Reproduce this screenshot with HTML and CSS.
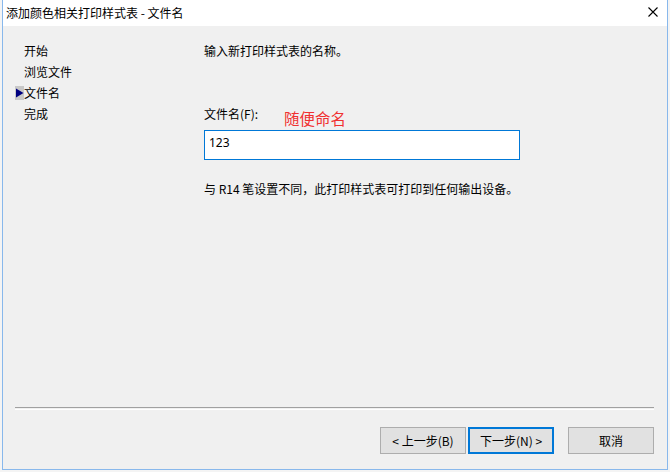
FILE: index.html
```html
<!DOCTYPE html>
<html lang="zh-CN">
<head>
<meta charset="utf-8">
<title>添加颜色相关打印样式表 - 文件名</title>
<link rel="stylesheet" href="styles.css">
</head>
<body>
<div class="window">
  <div class="titlebar">
    <span class="title">添加颜色相关打印样式表 - 文件名</span>
    <svg class="close" width="10" height="10" viewBox="0 0 10 10"><path d="M0.5 0.5 L9.5 9.5 M9.5 0.5 L0.5 9.5" stroke="#000" stroke-width="1.1" fill="none"/></svg>
  </div>
  <div class="body">
    <div class="main">
      <ul class="nav">
        <li class="nav-item"><span class="marker"></span>开始</li>
        <li class="nav-item"><span class="marker"></span>浏览文件</li>
        <li class="nav-item active"><span class="marker"><svg width="9" height="14" viewBox="0 0 9 14"><path d="M1 2.5 L8.5 7 L1 11.5 Z" fill="#000080"/></svg></span>文件名</li>
        <li class="nav-item"><span class="marker"></span>完成</li>
      </ul>
      <div class="content">
        <p class="intro">输入新打印样式表的名称。</p>
        <div class="label-row">
          <label class="label" for="fname">文件名(F):</label>
          <span class="annotation">随便命名</span>
        </div>
        <div class="input" id="fname">123</div>
        <p class="note">与 R14 笔设置不同，此打印样式表可打印到任何输出设备。</p>
      </div>
    </div>
    <div class="separator"></div>
    <div class="footer">
      <button class="btn back">&lt; 上一步(B)</button>
      <button class="btn next">下一步(N) &gt;</button>
      <button class="btn cancel">取消</button>
    </div>
  </div>
</div>
</body>
</html>
```
FILE: styles.css
```css
html, body {
  margin: 0;
  padding: 0;
}
body {
  width: 670px;
  height: 472px;
  background: #f4f4f4;
  font-family: "Noto Sans", "Noto Sans CJK SC", sans-serif;
  font-size: 12px;
  color: #000;
  overflow: hidden;
}
.window {
  margin-left: 2px;
  width: 664px;
  height: 469px;
  border: 1px solid #88b8ec;
  border-top: none;
  display: flex;
  flex-direction: column;
  background: #f0f0f0;
}
.titlebar {
  height: 26px;
  background: #fff;
  display: flex;
  align-items: center;
  justify-content: space-between;
  padding: 0 9px 0 3px;
  flex: none;
}
.title {
  font-family: "Noto Sans CJK SC", sans-serif;
  font-size: 12px;
  line-height: 26px;
  margin-top: -1px;
}
.close {
  display: block;
  margin-top: -2px;
}
.body {
  flex: 1;
  display: flex;
  flex-direction: column;
}
.main {
  height: 381px;
  display: flex;
  flex: none;
}
.nav {
  list-style: none;
  margin: 0;
  padding: 14px 0 0 12px;
  width: 189px;
  font-family: "Noto Sans CJK SC", sans-serif;
}
.nav-item {
  height: 21px;
  line-height: 21px;
  display: flex;
  align-items: center;
}
.marker {
  width: 9px;
  height: 14px;
  flex: none;
  display: flex;
  align-items: center;
}
.nav-item.active .marker {
  background: #c8c8c8;
}
.marker svg {
  display: block;
}
.content {
  flex: 1;
  padding-top: 14px;
  font-family: "Noto Sans CJK SC", sans-serif;
}
.intro {
  margin: 0;
  line-height: 21px;
}
.label-row {
  position: relative;
  margin-top: 42px;
  height: 21px;
  line-height: 21px;
}
.annotation {
  position: absolute;
  left: 80px;
  top: 5px;
  color: #f03030;
  font-size: 15.5px;
  line-height: 20px;
}
.input {
  margin-top: 6px;
  width: 310px;
  height: 28px;
  border: 1px solid #0078d7;
  background: #fff;
  box-sizing: content-box;
  padding: 0 0 0 4px;
  line-height: 24px;
  font-family: "Noto Sans", sans-serif;
  font-size: 12px;
}
.note {
  margin: 18px 0 0;
  line-height: 21px;
}
.separator {
  margin: 0 13px 0 12px;
  height: 1px;
  border-top: 1px solid #a0a0a0;
  border-bottom: 1px solid #fff;
  flex: none;
}
.footer {
  flex: 1;
  display: flex;
  justify-content: flex-end;
  align-items: flex-start;
  padding: 17px 13px 0 0;
}
.btn {
  width: 86px;
  height: 27px;
  margin: 0;
  padding: 0;
  border: 1px solid #adadad;
  background: #e1e1e1;
  font-family: "Noto Sans CJK SC", sans-serif;
  font-size: 12px;
  color: #000;
  line-height: 23px;
}
.btn.next {
  margin-left: 2px;
  border: 2px solid #0078d7;
}
.btn.cancel {
  margin-left: 14px;
}
```
